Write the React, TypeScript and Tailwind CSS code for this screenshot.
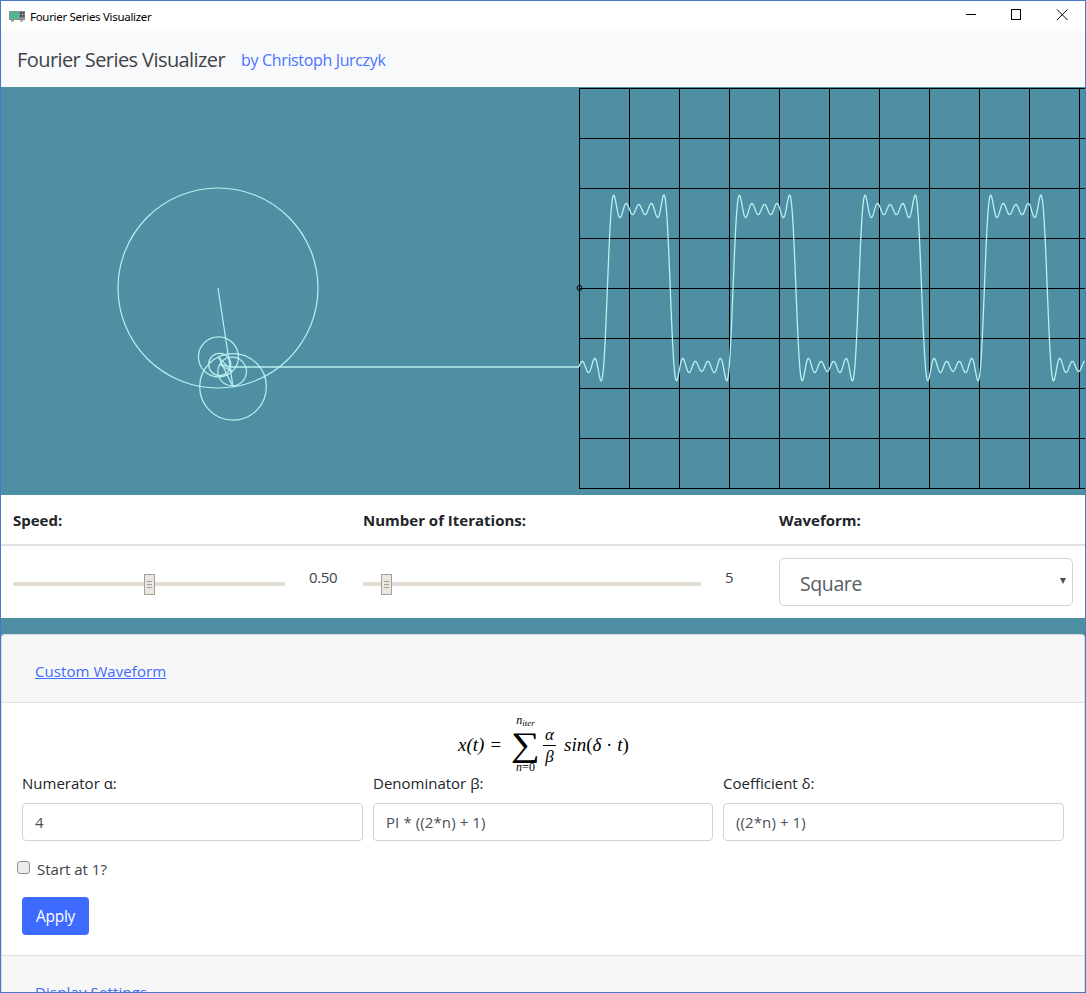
import React from "react";

const font = { fontFamily: '"Open Sans", "Noto Sans", sans-serif' };

function wavePath() {
  const theta = 1.42;
  const radii = [100, 33.33, 20, 14.29, 11.11];
  let d = "";
  for (let x = 579; x <= 1086; x += 0.5) {
    const phi = theta - 0.05 * (x - 579);
    let y = 288;
    radii.forEach((r, n) => {
      y += r * Math.sin((2 * n + 1) * phi);
    });
    d += (d ? "L" : "M") + x + " " + y.toFixed(2);
  }
  return d;
}

function Epicycles() {
  const theta = 1.42;
  const radii = [100, 33.33, 20, 14.29, 11.11];
  let cx = 218;
  let cy = 288;
  const parts: React.ReactNode[] = [];
  radii.forEach((r, n) => {
    const nx = cx + r * Math.cos((2 * n + 1) * theta);
    const ny = cy + r * Math.sin((2 * n + 1) * theta);
    parts.push(<circle key={"c" + n} cx={cx} cy={cy} r={r} fill="none" stroke="#b9f0f0" strokeWidth="1.2" />);
    parts.push(<line key={"l" + n} x1={cx} y1={cy} x2={nx} y2={ny} stroke="#b9f0f0" strokeWidth="1.2" />);
    cx = nx;
    cy = ny;
  });
  parts.push(<line key="h" x1={cx} y1={367} x2={579} y2={367} stroke="#b9f0f0" strokeWidth="1.6" />);
  return <g>{parts}</g>;
}

function Scope() {
  const vs = [579, 629, 679, 729, 779, 829, 879, 929, 979, 1029, 1079];
  const hs = [88, 138, 188, 238, 288, 338, 388, 438, 488];
  return (
    <svg className="block w-full h-[408px] bg-[#4f8fa4] shrink-0" viewBox="1 87 1084 408">
      {vs.map((x) => (
        <line key={x} x1={x + 0.5} y1={88} x2={x + 0.5} y2={489} stroke="#000" strokeWidth="1" />
      ))}
      {hs.map((y) => (
        <line key={y} x1={579} y1={y + 0.5} x2={1086} y2={y + 0.5} stroke="#000" strokeWidth="1" />
      ))}
      <circle cx={579.5} cy={288} r={2.5} fill="none" stroke="#000" strokeWidth="1" />
      <Epicycles />
      <path d={wavePath()} fill="none" stroke="#b9f0f0" strokeWidth="1.3" />
    </svg>
  );
}

function Slider({ width, thumb }: { width: string; thumb: string }) {
  return (
    <div className={"relative h-1 bg-[#e3ddd6] " + width}>
      <div className={"absolute -top-2 w-[11px] h-[21px] bg-[#ebe7e0] border border-[#a69f95] flex flex-col items-center justify-center gap-[2px] " + thumb}>
        <span className="block w-[5px] h-px bg-[#a69f95]" />
        <span className="block w-[5px] h-px bg-[#a69f95]" />
        <span className="block w-[5px] h-px bg-[#a69f95]" />
      </div>
    </div>
  );
}

function Field({ label, value, width, ml }: { label: string; value: string; width: string; ml: string }) {
  return (
    <div className={"flex flex-col shrink-0 " + width + " " + ml}>
      <div className="text-[15px] leading-5 text-[#212529] h-[33px] pt-[3px] whitespace-nowrap">{label}</div>
      <div className="h-[38px] border border-[#ced4da] rounded bg-white pl-3 flex items-center text-[15px] text-[#495057] tracking-[0.1px]">{value}</div>
    </div>
  );
}

function Formula() {
  const serif = { fontFamily: '"Liberation Serif", serif' };
  return (
    <div className="h-[67px] shrink-0 flex justify-center items-start text-black" style={serif}>
      <div className="flex items-center h-[67px] w-[172px] pt-[17px] ml-[2px]">
        <span className="text-[19px] italic w-[54px] whitespace-nowrap">
          x(t)<span className="not-italic ml-[6px]">=</span>
        </span>
        <span className="relative flex justify-center w-[27px] h-[34px]">
          <span className="absolute -top-[14px] text-[12px] italic leading-none whitespace-nowrap">
            n<span className="text-[9px] leading-none relative top-[2px]">iter</span>
          </span>
          <span className="text-[34px] leading-none scale-x-[1.2]">∑</span>
          <span className="absolute top-[33px] text-[12px] leading-none whitespace-nowrap">
            <i>n</i>=0
          </span>
        </span>
        <span className="flex flex-col items-center w-[13px] ml-[4px] text-[17px] italic leading-[21px]">
          <span>α</span>
          <span className="block w-full h-px bg-black" />
          <span>β</span>
        </span>
        <span className="text-[19px] italic ml-2 whitespace-nowrap">
          sin<span className="not-italic">(</span>δ<span className="not-italic"> · </span>t<span className="not-italic">)</span>
        </span>
      </div>
    </div>
  );
}

export default function App() {
  return (
    <div className="w-[1086px] h-[993px] overflow-hidden border border-[#4a76c7] flex flex-col bg-[#4f8fa4] text-[#212529]" style={font}>
      <div className="h-[30px] bg-white flex items-center shrink-0 relative">
        <svg className="ml-2 w-[17px] h-[12px]" viewBox="0 0 17 12">
          <rect x="0" y="1" width="16" height="9" fill="#8a8f8f" />
          <rect x="1" y="2" width="9" height="7" fill="#4fb892" />
          <rect x="11" y="2" width="2" height="2" fill="#3c4444" />
          <rect x="14" y="2" width="1.5" height="2" fill="#3c4444" />
          <rect x="11" y="5" width="2" height="2" fill="#3c4444" />
          <rect x="14" y="5" width="1.5" height="2" fill="#3c4444" />
          <rect x="2" y="10" width="3" height="1.5" fill="#9a9a9a" />
          <rect x="11" y="10" width="3" height="1.5" fill="#9a9a9a" />
        </svg>
        <span className="ml-[4px] mt-px text-[11.5px] text-black tracking-[-0.3px] whitespace-nowrap" style={{ fontFamily: '"Noto Sans", sans-serif' }}>
          Fourier Series Visualizer
        </span>
        <svg className="absolute left-[964px] top-[8px] w-[110px] h-[14px]" viewBox="964 9 110 14">
          <line x1="965" y1="14.5" x2="975" y2="14.5" stroke="#000" strokeWidth="1" />
          <rect x="1010.5" y="9.5" width="9" height="10" fill="none" stroke="#000" strokeWidth="1" />
          <path d="M1056 9.5 L1066.5 20 M1066.5 9.5 L1056 20" stroke="#000" strokeWidth="1" fill="none" />
        </svg>
      </div>
      <div className="h-14 bg-[#f8f9fa] flex items-center pl-4 pt-[2px] shrink-0">
        <span className="text-[20px] text-[#3f4347] tracking-[-0.58px] whitespace-nowrap">Fourier Series Visualizer</span>
        <span className="ml-4 text-[16px] text-[#4a74ff] tracking-[-0.35px] whitespace-nowrap">by Christoph Jurczyk</span>
      </div>
      <Scope />
      <div className="h-[123px] bg-white shrink-0 flex flex-col">
        <div className="h-[51px] border-b-2 border-[#dee2e6] flex items-center text-[15px] font-bold pt-[1px]">
          <div className="w-[362px] pl-3">Speed:</div>
          <div className="w-[416px]">Number of Iterations:</div>
          <div>Waveform:</div>
        </div>
        <div className="flex-1 flex">
          <div className="w-[362px] pl-3 flex">
            <div className="pt-[36px]">
              <Slider width="w-[272px]" thumb="left-[131px]" />
            </div>
            <div className="ml-6 pt-[20px] text-[15px] text-[#3f4347] tracking-[-0.4px]">0.50</div>
          </div>
          <div className="w-[416px] flex">
            <div className="pt-[36px]">
              <Slider width="w-[338px]" thumb="left-[18px]" />
            </div>
            <div className="ml-6 pt-[20px] text-[15px] text-[#3f4347]">5</div>
          </div>
          <div className="pt-3">
            <div className="w-[294px] h-[48px] border border-[#ced4da] rounded-[5px] bg-white flex items-center pl-5 pt-1 relative text-[19.5px] text-[#565e66] tracking-[-0.4px]">
              Square
              <span className="absolute right-[6px] top-[19px] w-0 h-0 border-x-[3px] border-x-transparent border-t-[6px] border-t-[#495057]" />
            </div>
          </div>
        </div>
      </div>
      <div className="h-4 shrink-0" />
      <div className="flex-1 min-h-0 bg-white rounded-t-[4px] border border-b-0 border-[#d9dcdf] overflow-hidden flex flex-col">
        <div className="h-[68px] shrink-0 bg-[#f7f7f7] border-b border-[#dfdfdf] flex items-center pl-[33px] pt-[5px]">
          <span className="text-[15px] text-[#3e6bff] underline tracking-[0.07px]">Custom Waveform</span>
        </div>
        <Formula />
        <div className="flex shrink-0">
          <Field label="Numerator α:" value="4" width="w-[341px]" ml="ml-[20px]" />
          <Field label="Denominator β:" value="PI * ((2*n) + 1)" width="w-[340px]" ml="ml-[10px]" />
          <Field label="Coefficient δ:" value="((2*n) + 1)" width="w-[341px]" ml="ml-[10px]" />
        </div>
        <div className="flex items-start ml-[15px] mt-[20px] h-[36px] shrink-0">
          <span className="w-[13px] h-[13px] rounded-[3px] border border-[#8e8e8e] bg-[#ececec] shrink-0" />
          <span className="ml-[7px] text-[15px] leading-5 -mt-[2px] text-[#3f4347]">Start at 1?</span>
        </div>
        <div className="ml-[20px] w-[67px] h-[38px] shrink-0 rounded bg-[#3e6bff] text-white text-[15.5px] flex items-center justify-center pt-px tracking-[-0.3px]">
          Apply
        </div>
        <div className="mt-5 flex-1 bg-[#f7f7f7] border-t border-[#dfdfdf] pl-[33px] pt-[24px]">
          <span className="text-[15px] text-[#3e6bff] underline tracking-[0.13px] whitespace-nowrap">Display Settings</span>
        </div>
      </div>
    </div>
  );
}
